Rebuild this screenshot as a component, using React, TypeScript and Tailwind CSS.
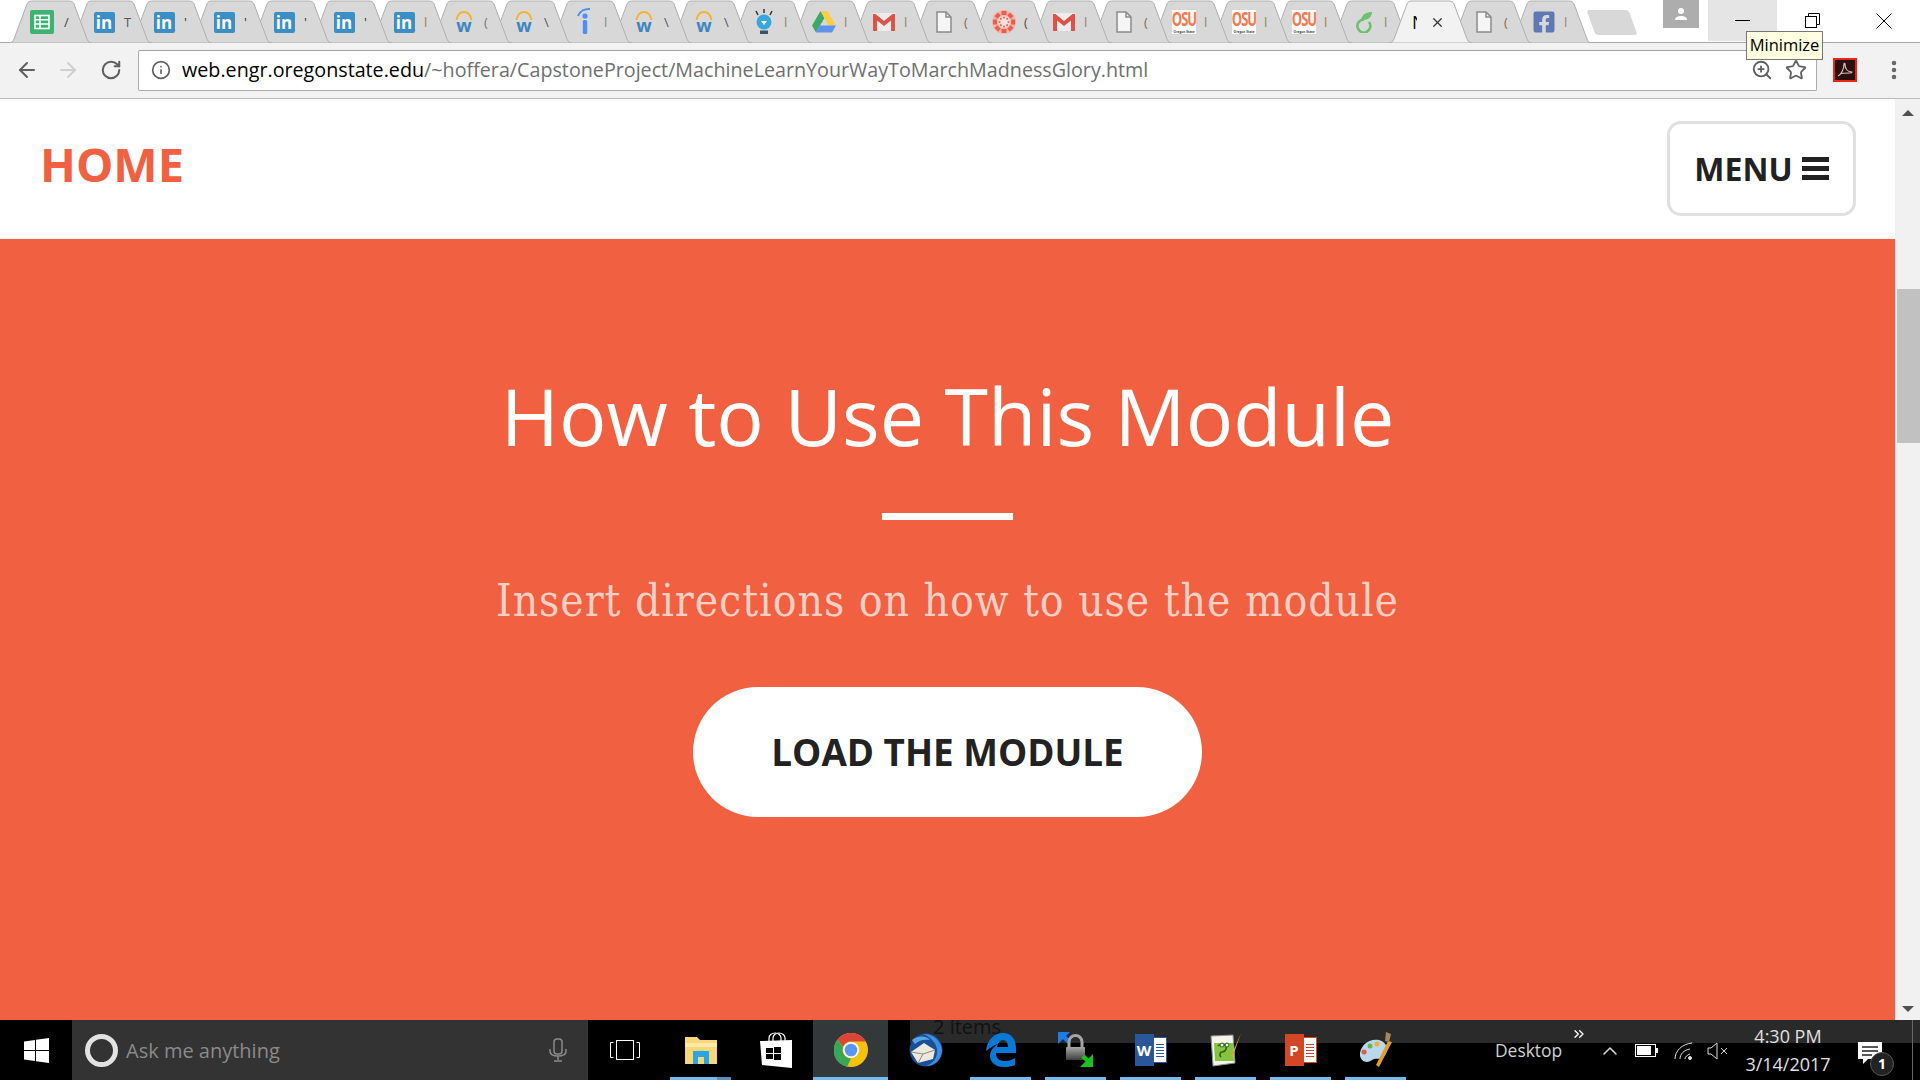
import { ArrowLeft, ArrowRight, ChevronsRight, ChevronUp, Info, MoreVertical, RotateCw, Star, X, ZoomIn } from "lucide-react";
import { FaFacebookSquare } from "react-icons/fa";
import type { ReactNode } from "react";

const sans = "font-['Open_Sans',sans-serif]";

function SheetsIcon() {
  return (
    <div className="mr-[4px] flex h-6 w-6 shrink-0 items-center justify-center rounded-[2px] bg-[#3cb371]">
      <svg width="16" height="16" viewBox="0 0 16 16" fill="none" stroke="#fff" strokeWidth="1.6">
        <rect x="1" y="1.5" width="14" height="13" />
        <path d="M1 5.8h14M1 10h14M6 1.5v13" />
      </svg>
    </div>
  );
}

function LinkedInIcon() {
  return (
    <div className={`flex h-[21px] w-[21px] items-center justify-center rounded-[2px] bg-[#3a8fc7] text-[17px] leading-none font-bold text-white ${sans}`}>
      in
    </div>
  );
}

function WorkdayIcon() {
  return (
    <div className="relative flex h-6 w-6 items-end justify-center">
      <svg className="absolute top-0 left-[3px]" width="18" height="11" viewBox="0 0 18 11" fill="none">
        <path d="M1.5 10C2.5 4.5 5.5 2 9 2s6.500 2.500 7.500 8" stroke="#f5b335" strokeWidth="2" />
      </svg>
      <span className={`text-[18px] leading-[17px] font-bold text-[#3f86c0] ${sans}`}>w</span>
    </div>
  );
}

function IndeedIcon() {
  return (
    <svg width="16" height="30" viewBox="0 0 16 30" fill="none">
      <path d="M2 9C4 4 9 1.500 14 2" stroke="#4c8df6" strokeWidth="2" />
      <circle cx="9" cy="9" r="2.600" fill="#4c8df6" />
      <rect x="6.800" y="13" width="4.400" height="14" rx="1.500" fill="#4c8df6" />
    </svg>
  );
}

function BulbIcon() {
  return (
    <svg width="24" height="26" viewBox="0 0 24 26" fill="none">
      <path d="M12 0v4M4 2l2 4M20 2l-2 4" stroke="#333" strokeWidth="1.500" />
      <circle cx="12" cy="13" r="7.500" fill="#38a8dc" />
      <path d="M9 12h6l-3 4z" fill="#fff" />
      <rect x="8" y="21.500" width="8" height="3.500" fill="#33566b" />
    </svg>
  );
}

function DriveIcon() {
  return (
    <svg width="24" height="24" viewBox="0 0 24 24">
      <path d="M8.500 1 0 15.500l4 7L12.500 8z" fill="#3fa868" />
      <path d="M8.500 1h7l8.500 14.500h-7.500z" fill="#f7cf45" />
      <path d="M4 22.500l4-7h16l-4 7z" fill="#5f92ee" />
    </svg>
  );
}

function GmailIcon() {
  return (
    <svg width="22" height="18" viewBox="0 0 22 18">
      <rect width="22" height="18" rx="1" fill="#ececec" />
      <path d="M0 18V1h2.500L11 8l8.500-7H22v17h-4V7.500L11 13 4 7.500V18z" fill="#dd5347" />
    </svg>
  );
}

function FileIcon() {
  return (
    <svg width="16" height="22" viewBox="0 0 16 22" fill="#f5f5f5" stroke="#8a8a8a" strokeWidth="1.500">
      <path d="M1 1h9l5 5v15H1z" />
      <path d="M10 1v5h5" fill="none" />
    </svg>
  );
}

function CanvasIcon() {
  const angles = [0, 45, 90, 135, 180, 225, 270, 315];
  return (
    <svg width="24" height="24" viewBox="0 0 24 24" fill="#e8614f">
      <circle cx="12" cy="12" r="12" fill="#f4b5ab" />
      <circle cx="12" cy="12" r="6" fill="#f2e1dd" />
      {angles.map((a) => (
        <g key={a} transform={`rotate(${a} 12 12)`}>
          <rect x="9.500" y="1" width="5" height="4" />
          <circle cx="12" cy="7.500" r="1" />
        </g>
      ))}
    </svg>
  );
}

function OsuIcon() {
  return (
    <div className={`flex h-[24px] w-[24px] flex-col items-center bg-white text-[#f4794e] ${sans}`}>
      <span className="origin-top scale-y-[1.45] text-[13px] leading-[13px] font-bold tracking-[-1px]">OSU</span>
      <span className="mt-[6px] scale-x-[0.8] text-[4px] leading-[5px] font-bold whitespace-nowrap text-[#444]">Oregon State</span>
    </div>
  );
}

function EvernoteIcon() {
  return (
    <svg width="18" height="22" viewBox="0 0 18 22" fill="none">
      <path d="M9 8.500A6.500 6.500 0 1 0 14 11" stroke="#6cc070" strokeWidth="2.600" />
      <path d="M6 9C7 3 12 1 17 1c0 5-4 8-9 8z" fill="#6cc070" />
    </svg>
  );
}

const stripIcons: { key: string; icon: ReactNode; title: string; color: string }[] = [
  { key: "sheets", icon: <SheetsIcon />, title: "/", color: "#444" },
  { key: "li1", icon: <LinkedInIcon />, title: "T", color: "#555" },
  { key: "li2", icon: <LinkedInIcon />, title: "'", color: "#333" },
  { key: "li3", icon: <LinkedInIcon />, title: "'", color: "#333" },
  { key: "li4", icon: <LinkedInIcon />, title: "'", color: "#333" },
  { key: "li5", icon: <LinkedInIcon />, title: "'", color: "#333" },
  { key: "li6", icon: <LinkedInIcon />, title: "l", color: "#a97b4f" },
  { key: "w1", icon: <WorkdayIcon />, title: "(", color: "#777" },
  { key: "w2", icon: <WorkdayIcon />, title: "\\", color: "#555" },
  { key: "i", icon: <IndeedIcon />, title: "l", color: "#888" },
  { key: "w3", icon: <WorkdayIcon />, title: "\\", color: "#555" },
  { key: "w4", icon: <WorkdayIcon />, title: "\\", color: "#555" },
  { key: "bulb", icon: <BulbIcon />, title: "l", color: "#8a8a6a" },
  { key: "drive", icon: <DriveIcon />, title: "l", color: "#8a8a6a" },
  { key: "gm1", icon: <GmailIcon />, title: "l", color: "#8a8a6a" },
  { key: "file1", icon: <FileIcon />, title: "(", color: "#8a6a4a" },
  { key: "canvas", icon: <CanvasIcon />, title: "(", color: "#5a4a3a" },
  { key: "gm2", icon: <GmailIcon />, title: "l", color: "#8a8a6a" },
  { key: "file2", icon: <FileIcon />, title: "(", color: "#8a6a4a" },
  { key: "osu1", icon: <OsuIcon />, title: "l", color: "#8a8a6a" },
  { key: "osu2", icon: <OsuIcon />, title: "l", color: "#8a8a6a" },
  { key: "osu3", icon: <OsuIcon />, title: "l", color: "#a97b4f" },
  { key: "ever", icon: <EvernoteIcon />, title: "l", color: "#8a8a6a" },
];

function TabShape({ active = false }: { active?: boolean }) {
  return (
    <svg className="absolute inset-0" width="85" height="43" viewBox="0 0 85 43">
      <path
        d="M1 43C3 43 5 42 6 39L19 4C20 2 21 1 24 1H61C64 1 65 2 66 4L79 39C80 42 82 43 84 43Z"
        fill={active ? "#f2f2f2" : "#d8d8d8"}
        stroke="#b0b0b0"
        strokeWidth="1"
      />
    </svg>
  );
}

function Tab({ icon, title, color, z }: { icon: ReactNode; title: string; color: string; z: number }) {
  return (
    <div className="relative -mr-[25px] h-[43px] w-[85px] shrink-0" style={{ zIndex: z }}>
      <TabShape />
      <div className="absolute top-[10px] left-6 flex h-6 w-[48px] items-center">
        <div className="flex w-6 shrink-0 items-center justify-center">{icon}</div>
        <span className={`ml-[8px] text-[13px] leading-none ${sans}`} style={{ color }}>
          {title}
        </span>
      </div>
    </div>
  );
}

function TabStrip() {
  return (
    <div className="relative flex h-[43px] shrink-0 bg-white pl-[8px]">
      <div className="absolute right-0 bottom-0 left-0 h-px bg-[#a6a6a6]" />
      {stripIcons.map((t, i) => (
        <Tab key={t.key} icon={t.icon} title={t.title} color={t.color} z={40 - i} />
      ))}
      <div className="relative z-50 -mr-[25px] h-[43px] w-[85px] shrink-0">
        <TabShape active />
        <div className="absolute top-[10px] left-6 flex h-6 items-center">
          <span className={`w-[5px] overflow-hidden text-[18px] leading-none text-black ${sans}`}>N</span>
          <X size={15} strokeWidth={2} className="ml-[13px] text-[#333]" />
        </div>
      </div>
      <Tab icon={<FileIcon />} title="(" color="#8a6a4a" z={11} />
      <Tab icon={<FaFacebookSquare size={24} color="#6078b4" />} title="l" color="#8a8a8a" z={10} />
      <div className="mt-[10px] ml-[23px] h-[25px] w-[42px] skew-x-[20deg] rounded-[3px] bg-[#d8d8d8]" />
      <div className="ml-auto flex h-[42px] items-start">
        <div className="flex h-7 w-9 items-center justify-center bg-[#adadad]">
          <svg width="14" height="14" viewBox="0 0 14 14" fill="#fff">
            <circle cx="7" cy="4" r="3" />
            <path d="M1 13c0-3 3-4 6-4s6 1 6 4z" />
          </svg>
        </div>
        <div className="ml-[9px] flex h-[41px] w-[69px] items-center justify-center bg-[#e5e5e5]">
          <div className="h-px w-[15px] bg-black" />
        </div>
        <div className="flex h-[41px] w-[71px] items-center justify-center">
          <svg width="15" height="15" viewBox="0 0 15 15" fill="none" stroke="#000">
            <rect x="0.500" y="3.500" width="11" height="11" />
            <path d="M3.500 3.500v-3h11v11h-3" />
          </svg>
        </div>
        <div className="flex h-[41px] w-[72px] items-center justify-center">
          <svg width="16" height="16" viewBox="0 0 16 16" stroke="#000" strokeWidth="1">
            <path d="M0.500 0.500l15 15M15.500 0.500l-15 15" />
          </svg>
        </div>
      </div>
    </div>
  );
}

function AddressBar() {
  return (
    <div className="relative flex h-[56px] shrink-0 items-center border-b border-[#bcbcbc] bg-[#f2f2f2] pr-[13px] pb-[1px]">
      <div className="flex w-[138px] items-center pl-[15px] text-[#5f5f5f]">
        <ArrowLeft size={24} strokeWidth={2} />
        <ArrowRight size={24} strokeWidth={2} className="ml-[17px] text-[#cfcfcf]" />
        <RotateCw size={22} strokeWidth={2.200} className="ml-[20px]" />
      </div>
      <div className="flex h-[41px] w-[1679px] items-center rounded-[2px] border border-[#ababab] border-t-[#a0a0a0] bg-white pr-[9px] pl-[12px]">
        <Info size={20} strokeWidth={2} className="text-[#5f5f5f]" />
        <span className={`ml-[11px] text-[19.72px] leading-none whitespace-nowrap text-black ${sans}`}>
          web.engr.oregonstate.edu
          <span className="text-[#6f6f6f]">/~hoffera/CapstoneProject/MachineLearnYourWayToMarchMadnessGlory.html</span>
        </span>
        <ZoomIn size={22} strokeWidth={2} className="ml-auto text-[#5f5f5f]" />
        <Star size={22} strokeWidth={2} className="ml-[12px] text-[#5f5f5f]" />
      </div>
      <div className="ml-[16px] flex h-6 w-6 items-center justify-center border-2 border-[#e8261a] bg-[#2a0f0f]">
        <svg width="16" height="16" viewBox="0 0 16 16" fill="none" stroke="#d9bcbc" strokeWidth="1.200">
          <path d="M1 14c3-1 6-7 6-12 0-1 1-1 1 0 0 5 3 8 7 8 0 1-1 1-2 1-4 0-8 0-10 1" />
        </svg>
      </div>
      <MoreVertical size={24} strokeWidth={2.500} className="ml-[25px] text-[#666]" />
      <div className={`absolute top-[-12px] left-[1746px] z-[60] flex h-[29px] w-[77px] items-center justify-center border border-[#767676] bg-[#ffffe1] text-[16.5px] text-black ${sans}`}>
        Minimize
      </div>
    </div>
  );
}

function ScrollBar() {
  return (
    <div className="flex w-[25px] shrink-0 flex-col items-center bg-[#f1f1f1]">
      <div className="mt-[11px] h-0 w-0 border-x-[6px] border-b-[6px] border-x-transparent border-b-[#505050]" />
      <div className="mt-[173px] ml-[2px] h-[154px] w-[23px] bg-[#c1c1c1]" />
      <div className="mt-auto mb-[8px] h-0 w-0 border-x-[6px] border-t-[6px] border-x-transparent border-t-[#505050]" />
    </div>
  );
}

function Page() {
  return (
    <div className="flex min-h-0 flex-1">
      <div className="flex min-w-0 flex-1 flex-col">
        <nav className="flex h-[140px] shrink-0 items-center justify-between border-b border-[#f3f3f3] bg-white pr-[39px] pl-[40px]">
          <a className={`mb-[8px] text-[47px] leading-none font-bold text-[#f16040] ${sans}`}>HOME</a>
          <button className={`flex h-[95px] w-[189px] items-center justify-center gap-[9px] rounded-[14px] border-[3px] border-[#e0e0e0] bg-white text-[32px] leading-none font-bold text-[#222] ${sans}`}>
            MENU
            <svg width="27" height="23" viewBox="0 0 27 23" fill="#222">
              <rect width="27" height="5" />
              <rect y="9" width="27" height="5" />
              <rect y="18" width="27" height="5" />
            </svg>
          </button>
        </nav>
        <section className="flex flex-1 flex-col items-center bg-[#f16040]">
          <h1 className={`mt-[124px] text-[79px] leading-[106px] font-normal text-white ${sans}`}>How to Use This Module</h1>
          <div className="mt-[44px] h-[7px] w-[131px] bg-white" />
          <p className="mt-[48px] text-[44px] leading-[66px] tracking-[0.95px] whitespace-nowrap text-[#fbcfc4] font-['DejaVu_Serif_Condensed','DejaVu_Serif',serif]">Insert directions on how to use the module</p>
          <button className={`mt-[53px] flex h-[130px] w-[509px] items-center justify-center rounded-full bg-white pt-[2px] text-[36.8px] font-bold text-[#222] ${sans}`}>
            LOAD THE MODULE
          </button>
        </section>
      </div>
      <ScrollBar />
    </div>
  );
}

function ChromeIcon() {
  return (
    <svg width="34" height="34" viewBox="0 0 34 34">
      <circle cx="17" cy="17" r="17" fill="#f4c20d" />
      <path d="M17 0a17 17 0 0 1 14.700 8.500H17a8.500 8.500 0 0 0-8 5.500L3.500 6.500A17 17 0 0 1 17 0z" fill="#db4437" />
      <path d="M3.500 6.500 9 14a8.500 8.500 0 0 0 8 11.500L13 34A17 17 0 0 1 3.500 6.500z" fill="#3aa757" />
      <circle cx="17" cy="17" r="8" fill="#fff" />
      <circle cx="17" cy="17" r="6.300" fill="#5a95f0" />
    </svg>
  );
}

function ExplorerIcon() {
  return (
    <svg width="34" height="30" viewBox="0 0 34 30">
      <path d="M1 2h12l3 3h17v24H1z" fill="#f7d778" />
      <rect x="1" y="8" width="32" height="4" fill="#fbe9a9" />
      <path d="M9 16h16v13h-5v-7h-6v7H9z" fill="#2ba4e3" />
    </svg>
  );
}

function StoreIcon() {
  return (
    <svg width="32" height="36" viewBox="0 0 32 36">
      <path d="M9 9V6a6 5 0 0 1 12 0v3M13 9V6a6 5 0 0 1 12 0v3" fill="none" stroke="#fff" strokeWidth="1.200" />
      <path d="M0 9l32-1v28L2 33z" fill="#fff" />
      <rect x="6" y="16" width="7" height="5" fill="#000" />
      <rect x="14" y="15" width="7" height="6" fill="#000" />
      <rect x="6" y="22" width="7" height="5" fill="#000" />
      <rect x="14" y="22" width="7" height="6" fill="#000" />
    </svg>
  );
}

function ThunderbirdIcon() {
  return (
    <svg width="34" height="36" viewBox="0 0 34 36">
      <circle cx="17" cy="18" r="16.500" fill="#1a4e96" />
      <path d="M14 2c9-1 18 6 19 16 0 9-7 16-16 16 8-3 12-9 11-17-1-6-6-12-14-15z" fill="#3f8fdc" />
      <path d="M3 8c5-4 13-5 18 0-6-1-11 0-15 4z" fill="#5aa5e8" />
      <path d="M2 20l13-9 11 7-2 9-15 4z" fill="#ece8de" />
      <path d="M2 20l12 2 12-4M14 22l-5 9" fill="none" stroke="#8f8a80" />
    </svg>
  );
}

function EdgeIcon() {
  return (
    <svg width="30" height="34" viewBox="0 0 30 34">
      <path d="M0 18C1 7 8 0 17 0c8 0 13 6 13 15v5H10c0 6 4 8 9 8 4 0 7-1 10-3v7c-3 1.500-7 2-11 2C9 34 4 29 4 23c0-5 3-9 8-12-4 1-8 4-12 7zm11-4h11c0-4-2-7-5-7-3 0-5 3-6 7z" fill="#0a78d6" />
    </svg>
  );
}

function LockIcon() {
  return (
    <svg width="36" height="36" viewBox="0 0 36 36">
      <defs>
        <linearGradient id="lockBody" x1="0" y1="0" x2="0" y2="1">
          <stop offset="0" stopColor="#a8a8a8" />
          <stop offset="1" stopColor="#3d3d3d" />
        </linearGradient>
      </defs>
      <path d="M0 0h12L0 12z" fill="#1f7bea" />
      <path d="M5 4l6 6" stroke="#1f7bea" strokeWidth="4.500" />
      <path d="M11 16V10a6.500 6.500 0 0 1 13 0v6" fill="none" stroke="#a5a5a5" strokeWidth="3" />
      <rect x="8" y="15" width="19" height="13" rx="1" fill="url(#lockBody)" />
      <path d="M35 35H22l13-13z" fill="#18c21c" />
      <path d="M25 24l6 6" stroke="#18c21c" strokeWidth="4.500" />
    </svg>
  );
}

function OfficeIcon({ letter, bg }: { letter: string; bg: string }) {
  return (
    <div className="relative flex h-8 w-[32px] items-center justify-start">
      <div className="absolute inset-y-[3px] right-0 left-[12px] flex flex-col justify-center gap-[2px] border border-white bg-white pr-[2px] pl-[8px]" style={{ borderColor: bg }}>
        <div className="h-px" style={{ background: bg }} />
        <div className="h-px" style={{ background: bg }} />
        <div className="h-px" style={{ background: bg }} />
        <div className="h-px" style={{ background: bg }} />
        <div className="h-px" style={{ background: bg }} />
      </div>
      <div
        className={`relative flex h-8 w-[19px] items-center justify-center text-[15px] font-bold text-white ${sans}`}
        style={{ background: bg }}
      >
        {letter}
      </div>
    </div>
  );
}

function NotepadIcon() {
  return (
    <svg width="32" height="34" viewBox="0 0 32 34">
      <path d="M1 3l22-1 2 28-22 3z" fill="#f4f4ea" stroke="#8a8a8a" />
      <path d="M4 10h19l1 18H5z" fill="#86c440" />
      <path d="M8 13c3-3 7-2 8 1s-2 5-4 5-3 3-1 5" fill="none" stroke="#2d5d1a" strokeWidth="1.500" />
      <circle cx="12" cy="12" r="2" fill="#f4f4ea" stroke="#2d5d1a" />
      <circle cx="17" cy="12" r="2" fill="#f4f4ea" stroke="#2d5d1a" />
      <path d="M31 0 22 21l-2 4 3-2z" fill="#e2a32a" />
    </svg>
  );
}

function PaintIcon() {
  return (
    <svg width="34" height="36" viewBox="0 0 34 36">
      <path d="M1 24C0 14 10 6 20 8c8 2 10 10 6 15-4 6-9 2-13 5s-10 3-12-4z" fill="#b9d9ea" />
      <circle cx="5" cy="20" r="2.500" fill="#e0584a" />
      <circle cx="11" cy="14" r="2.500" fill="#6fb348" />
      <circle cx="18" cy="12" r="2.500" fill="#e8b13a" />
      <path d="M33 10 29 9 17 33l3 2z" fill="#e59a2c" />
      <path d="M27 0l5 2-2 8-4-1z" fill="#a9855a" />
    </svg>
  );
}

const pinned: { key: string; icon: ReactNode; running?: boolean; active?: boolean }[] = [
  { key: "explorer", icon: <ExplorerIcon />, running: true },
  { key: "store", icon: <StoreIcon /> },
  { key: "chrome", icon: <ChromeIcon />, running: true, active: true },
  { key: "thunderbird", icon: <ThunderbirdIcon /> },
  { key: "edge", icon: <EdgeIcon />, running: true },
  { key: "lock", icon: <LockIcon />, running: true },
  { key: "word", icon: <OfficeIcon letter="W" bg="#2b579a" />, running: true },
  { key: "notepad", icon: <NotepadIcon />, running: true },
  { key: "ppt", icon: <OfficeIcon letter="P" bg="#d24726" />, running: true },
  { key: "paint", icon: <PaintIcon />, running: true },
];

function Taskbar() {
  return (
    <div className={`relative flex h-[60px] shrink-0 bg-black text-[#d0d0d0] ${sans}`}>
      <div className="absolute top-0 right-0 left-[910px] h-[23px] bg-[#2a2a2a] pl-[23px] text-[20px] leading-[14px] text-[#111]">
        <span>2 items</span>
      </div>
      <div className="relative flex w-[72px] shrink-0 items-center justify-center">
        <svg width="25" height="25" viewBox="0 0 25 25" fill="#fff">
          <path d="M0 3.500l11-1.500v10H0zM12 1.800 25 0v12H12zM0 13h11v10L0 21.500zM12 13h13v12l-13-1.800z" />
        </svg>
      </div>
      <div className="relative flex w-[516px] shrink-0 items-center bg-[#333] pr-[21px] pl-[13px]">
        <div className="h-[33px] w-[33px] rounded-full border-[5px] border-[#e2e2e2]" />
        <span className="mt-[1px] ml-[8px] text-[20px] text-[#8a8a8a]">Ask me anything</span>
        <svg className="ml-auto" width="18" height="24" viewBox="0 0 18 24" fill="none" stroke="#8a8a8a" strokeWidth="1.500">
          <rect x="5" y="1" width="8" height="15" rx="3" />
          <path d="M1 11v2c0 3 3 5 8 5s8-2 8-5v-2M9 18v4M5 23h8" />
        </svg>
      </div>
      <div className="relative flex w-[73px] shrink-0 items-center justify-center">
        <svg width="30" height="20" viewBox="0 0 30 20" fill="none" stroke="#fff">
          <rect x="6.500" y="0.500" width="17" height="19" />
          <path d="M3.500 2.500h-3v15h3M26.500 2.500h3v15h-3" />
        </svg>
      </div>
      <div className="w-[2px] shrink-0" />
      {pinned.map((p) => (
        <div key={p.key} className={`relative flex w-[75px] shrink-0 items-center justify-center ${p.active ? "bg-[#33383b]" : ""}`}>
          {p.icon}
          {p.running ? <div className={`absolute bottom-0 h-[3px] bg-[#76b9ed] ${p.active ? "right-0 left-0" : "right-[7px] left-[7px]"}`} /> : null}
          {p.key === "explorer" ? <div className="absolute right-[7px] bottom-0 h-[3px] w-[14px] bg-[#5d8fb5]" /> : null}
        </div>
      ))}
      <div className="relative ml-auto flex items-center pr-[8px]">
        <span className="w-[77px] text-[17.4px]">Desktop</span>
        <ChevronsRight size={16} strokeWidth={2} className="absolute top-[6px] left-[76px] text-white" />
      </div>
      <div className="relative flex w-[340px] shrink-0 items-center">
        <ChevronUp size={24} strokeWidth={1.500} className="mt-[1px] ml-[18px] text-[#ddd]" />
        <svg className="mt-[1px] ml-[13px]" width="23" height="13" viewBox="0 0 23 13" fill="none">
          <rect x="0.500" y="0.500" width="20" height="12" stroke="#fff" />
          <rect x="2" y="2" width="14" height="9" fill="#fff" />
          <rect x="21" y="4" width="2" height="5" fill="#fff" />
        </svg>
        <svg className="mt-[1px] ml-[16px]" width="20" height="18" viewBox="0 0 20 18" fill="none" stroke="#ddd">
          <path d="M1 17C1 9 8 2 18 1M6 17c0-5 4-9 10-10M11 17c0-2 2-4 5-5" />
          <circle cx="16" cy="16" r="1.500" fill="#ddd" />
        </svg>
        <svg className="mt-[1px] ml-[13px]" width="22" height="18" viewBox="0 0 22 18" fill="none" stroke="#ddd">
          <path d="M1 6h3l6-5v16l-6-5H1zM14 6l6 6M20 6l-6 6" />
        </svg>
        <div className="flex w-[118px] flex-col items-center text-[18px] leading-[28px] text-[#e0e0e0]">
          <span>4:30 PM</span>
          <span>3/14/2017</span>
        </div>
        <div className="relative mt-[7px] ml-[11px]">
          <svg width="24" height="24" viewBox="0 0 24 24" fill="#fff">
            <path d="M0 0h24v17H10l-5 5v-5H0z" />
            <path d="M4 5h16M4 9h16M4 13h10" stroke="#222" strokeWidth="1.500" />
          </svg>
          <div className="absolute top-[10px] left-[12px] flex h-6 w-6 items-center justify-center rounded-full border border-[#555] bg-[#222] text-[14px] font-bold text-white">1</div>
        </div>
        <div className="absolute top-0 right-[7px] h-full w-px bg-[#666]" />
      </div>
    </div>
  );
}

export default function App() {
  return (
    <div className="flex h-[1080px] w-[1920px] flex-col overflow-hidden bg-white">
      <TabStrip />
      <AddressBar />
      <Page />
      <Taskbar />
    </div>
  );
}
